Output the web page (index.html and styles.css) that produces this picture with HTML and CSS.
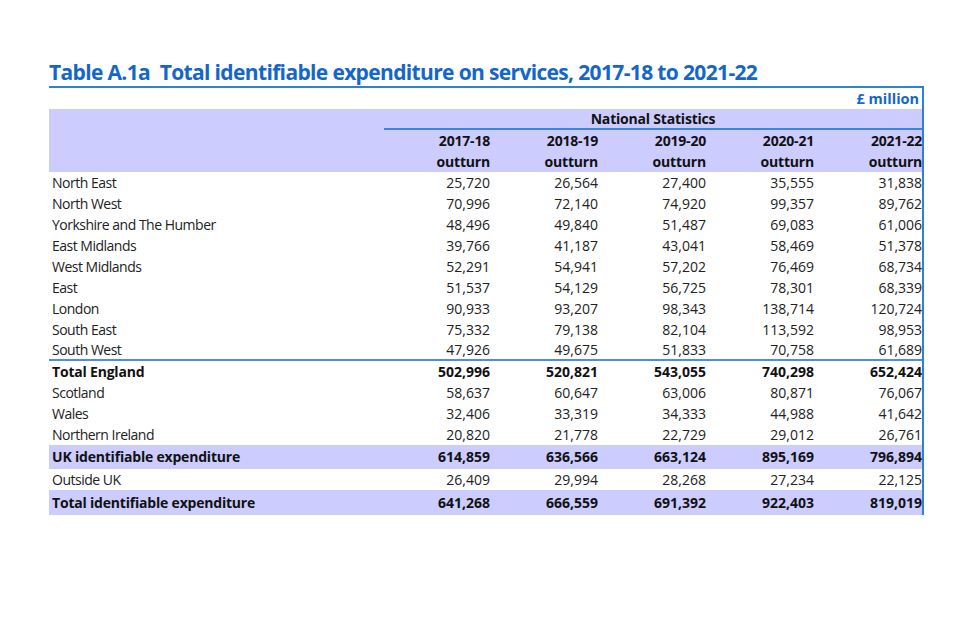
FILE: index.html
```html
<!DOCTYPE html>
<html lang="en">
<head>
<meta charset="utf-8">
<title>Table A.1a</title>
<link rel="stylesheet" href="styles.css">
</head>
<body>
<div class="page">
  <h1 class="title">Table A.1a&nbsp; Total identifiable expenditure on services, 2017-18 to 2021-22</h1>
  <div class="frame">
    <table class="data">
      <colgroup>
        <col class="c-label">
        <col class="c-first">
        <col class="c-num">
        <col class="c-num">
        <col class="c-num">
        <col class="c-num">
      </colgroup>
      <thead>
        <tr class="unit-row"><th colspan="6" class="unit">£ million</th></tr>
        <tr class="head ns-row"><th></th><th colspan="5" class="ns">National Statistics</th></tr>
        <tr class="head"><th></th><th>2017-18</th><th>2018-19</th><th>2019-20</th><th>2020-21</th><th>2021-22</th></tr>
        <tr class="head"><th></th><th>outturn</th><th>outturn</th><th>outturn</th><th>outturn</th><th>outturn</th></tr>
      </thead>
      <tbody>
        <tr><td>North East</td><td>25,720</td><td>26,564</td><td>27,400</td><td>35,555</td><td>31,838</td></tr>
        <tr><td>North West</td><td>70,996</td><td>72,140</td><td>74,920</td><td>99,357</td><td>89,762</td></tr>
        <tr><td>Yorkshire and The Humber</td><td>48,496</td><td>49,840</td><td>51,487</td><td>69,083</td><td>61,006</td></tr>
        <tr><td>East Midlands</td><td>39,766</td><td>41,187</td><td>43,041</td><td>58,469</td><td>51,378</td></tr>
        <tr><td>West Midlands</td><td>52,291</td><td>54,941</td><td>57,202</td><td>76,469</td><td>68,734</td></tr>
        <tr><td>East</td><td>51,537</td><td>54,129</td><td>56,725</td><td>78,301</td><td>68,339</td></tr>
        <tr><td>London</td><td>90,933</td><td>93,207</td><td>98,343</td><td>138,714</td><td>120,724</td></tr>
        <tr><td>South East</td><td>75,332</td><td>79,138</td><td>82,104</td><td>113,592</td><td>98,953</td></tr>
        <tr class="rule"><td>South West</td><td>47,926</td><td>49,675</td><td>51,833</td><td>70,758</td><td>61,689</td></tr>
        <tr class="bold"><td>Total England</td><td>502,996</td><td>520,821</td><td>543,055</td><td>740,298</td><td>652,424</td></tr>
        <tr><td>Scotland</td><td>58,637</td><td>60,647</td><td>63,006</td><td>80,871</td><td>76,067</td></tr>
        <tr><td>Wales</td><td>32,406</td><td>33,319</td><td>34,333</td><td>44,988</td><td>41,642</td></tr>
        <tr><td>Northern Ireland</td><td>20,820</td><td>21,778</td><td>22,729</td><td>29,012</td><td>26,761</td></tr>
        <tr class="bold band band-uk"><td>UK identifiable expenditure</td><td>614,859</td><td>636,566</td><td>663,124</td><td>895,169</td><td>796,894</td></tr>
        <tr><td>Outside UK</td><td>26,409</td><td>29,994</td><td>28,268</td><td>27,234</td><td>22,125</td></tr>
        <tr class="bold band band-total"><td>Total identifiable expenditure</td><td>641,268</td><td>666,559</td><td>691,392</td><td>922,403</td><td>819,019</td></tr>
      </tbody>
    </table>
  </div>
</div>
</body>
</html>
```

FILE: styles.css
```css
html, body {
  margin: 0;
  padding: 0;
  background: #ffffff;
}

body {
  font-family: "Open Sans", "Noto Sans", sans-serif;
  color: #222222;
}

.page {
  padding: 59px 0 0 49px;
  width: 875px;
}

.title {
  margin: 0;
  font-size: 21px;
  line-height: 27px;
  font-weight: 700;
  letter-spacing: -0.65px;
  color: #1467c8;
  white-space: nowrap;
}

.frame {
  border-top: 2px solid #2f80d6;
  border-right: 2px solid #2f80d6;
  width: 873px;
}

.data {
  border-collapse: collapse;
  width: 873px;
  table-layout: fixed;
  font-size: 14px;
  letter-spacing: 0;
}

.c-label { width: 335px; }
.c-first { width: 106px; }
.c-num { width: 108px; }

.data th,
.data td {
  padding: 0;
  height: 21px;
  line-height: 21px;
  text-align: right;
  white-space: nowrap;
}

.data td:first-child {
  text-align: left;
  padding-left: 3px;
  letter-spacing: -0.5px;
}

.unit {
  color: #1467c8;
  font-weight: 700;
  font-size: 14.5px;
  padding-right: 3px !important;
}

.head th {
  background: #ccccff;
  font-weight: 700;
  color: #111111;
  letter-spacing: -0.2px;
}

.ns-row th {
  height: 19px;
  line-height: 19px;
}

.ns-row th.ns {
  text-align: center;
  border-bottom: 2px solid #3a86d8;
}

.rule td {
  border-bottom: 2px solid #4a90dc;
  height: 19px;
  line-height: 19px;
}

.bold td {
  font-weight: 700;
  color: #111111;
}

.bold td:first-child {
  letter-spacing: -0.2px;
}

.band td {
  background: #ccccff;
}

.band-uk td {
  height: 24px;
  line-height: 24px;
}

.band-total td {
  height: 25px;
  line-height: 25px;
}
```
